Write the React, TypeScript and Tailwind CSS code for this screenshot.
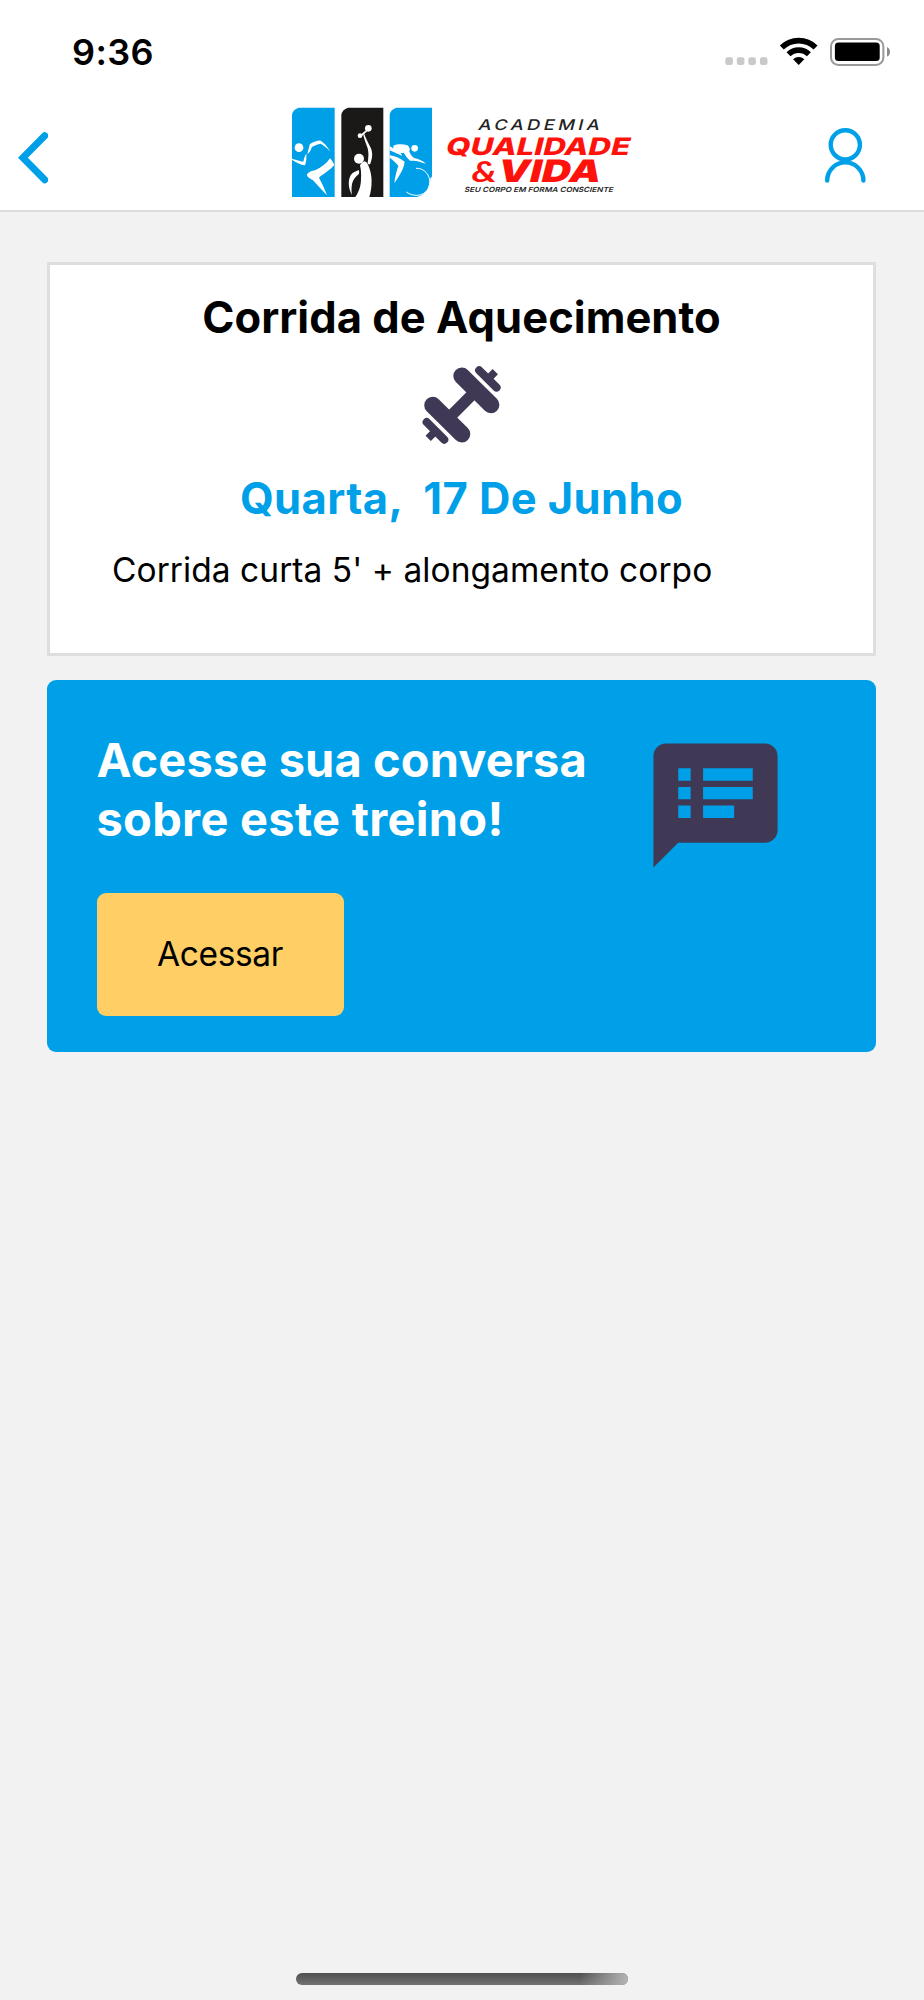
import { MdSpeakerNotes } from 'react-icons/md'

function StatusBar() {
  return (
    <div className="flex h-24 justify-between pl-[72px] pr-[34px] pt-8">
      <span className="text-[36px] font-semibold leading-10 tracking-[0.4px]">9:36</span>
      <svg className="mt-1 h-[30px] w-[166px]" viewBox="724 36 166 30">
        <g fill="#c9c9c9">
          <rect x="725.3" y="57.3" width="7.6" height="7.7" rx="2.3" />
          <rect x="736.8" y="57.3" width="7.6" height="7.7" rx="2.3" />
          <rect x="748.3" y="57.3" width="7.6" height="7.7" rx="2.3" />
          <rect x="759.9" y="57.3" width="7.6" height="7.7" rx="2.3" />
        </g>
        <g fill="none" stroke="#000" strokeWidth="5.6">
          <path d="M781.8 47.6a24 24 0 0 1 33.8 0" />
          <path d="M788.5 54.3a14.6 14.6 0 0 1 20.4 0" />
        </g>
        <path d="M798.7 65l-5.6-5.7a8.2 8.2 0 0 1 11.2 0z" />
        <rect x="831" y="38.9" width="52.4" height="26" rx="7.5" fill="none" stroke="#999" strokeWidth="2" />
        <rect x="834.9" y="42.6" width="44.8" height="18.4" rx="3.5" />
        <path d="M887 47c4 1.6 4 8.4 0 9.6z" fill="#8a8a8a" />
      </svg>
    </div>
  )
}

function Logo() {
  return (
    <svg className="h-[94px] w-[344px]" viewBox="291 106 344 94">
      <g transform="translate(280 95) scale(.33333)">
        <path d="M36 306V60q2-16 20-22h108v268z" fill="#00a0e9" />
        <path d="M184 306V60q2-16 20-22h106v268z" fill="#1a1918" />
        <path d="M329 306V60q2-16 20-22h107v268z" fill="#00a0e9" />
        <g fill="#fff">
          {/* runner */}
          <circle cx="57" cy="158" r="13" />
          <path d="M36 191c14 4 24 7 34 9c2-10 4-18 9-24c1 12 0 24-4 35c-14-2-27-9-39-17z" />
          <path d="M82 178c3-13 5-22 8-31c12-7 23-11 32-10c11 7 21 19 30 33c-10-10-20-19-30-24c-9 1-18 5-26 10c-3 8-7 16-14 22z" />
          <path d="M150 190c5 5 9 12 13 20c-12 14-27 23-42 34c-4 3-4 6-1 10c8 15 15 30 21 47c-13-14-27-29-40-43c-7-7-21-9-20-20c5-7 14-10 24-12c19-8 33-19 45-36z" />
          {/* lifter */}
          <circle cx="237" cy="191" r="15" />
          <circle cx="265" cy="100" r="10" />
          <circle cx="240" cy="122" r="7" />
          <path d="M242 119l20-17 3 4-20 18z" />
          <path d="M251 112c5 16 13 30 21 46c8 17 4 34-1 48c-3 4-7 2-8-2c2-15 4-29 0-44c-5-15-12-30-14-46z" />
          <path d="M240 211c4-6 9-11 14-12c7 2 10 10 14 20c9 25 9 56 0 87h-42c13-20 17-37 17-55c1-14 0-27-3-40z" />
          <path d="M236 225c2 5 2 9 0 13c-10 8-17 17-20 29c-2 12-2 22 0 33c-13-22-13-52 1-65c6-5 13-7 19-10z" />
          {/* cyclist */}
          <circle cx="404" cy="160" r="10" />
          <path d="M340 152c14-6 29-5 42-1c7 4 9 11 6 19c3 7 8 14 14 19c13 3 25 7 36 17l-11-3c-11-5-24-6-37-6c-7-6-13-14-19-24c-9 3-21 0-31-8z" />
          <path d="M329 153l17 11c10 6 20 12 20 18l-37-16z" />
          <path d="M329 181c16 2 30 8 45 19c-3 22-16 43-31 64c2-18 7-36 12-52c-8-10-16-17-26-24z" />
        </g>
        <path d="M408 220c20-1 35 12 40 30c5 25-8 49-35 51c-12 1-24-3-34-10" fill="none" stroke="#fff" strokeWidth="3" />
        <path d="M457 244v64h-56c34-4 50-28 50-58z" fill="#fff" />
      </g>
      <g fontFamily="Inter, sans-serif">
        <text transform="translate(477.5 129.7) skewX(-14) scale(1.25 1)" fontSize="14.7" fontWeight="500" fill="#222" textLength="97" lengthAdjust="spacing">ACADEMIA</text>
        <text transform="translate(444.5 154.7) skewX(-14)" fontSize="24" fontWeight="800" fill="#ff120b" textLength="184" lengthAdjust="spacingAndGlyphs">QUALIDADE</text>
        <text transform="translate(496 181.8) skewX(-14)" fontSize="31" fontWeight="900" fill="#ff120b" textLength="103" lengthAdjust="spacingAndGlyphs">VIDA</text>
        <text transform="translate(464 192.3) skewX(-14)" fontSize="7" fontWeight="600" fill="#222" textLength="149" lengthAdjust="spacingAndGlyphs">SEU CORPO EM FORMA CONSCIENTE</text>
      </g>
      <text x="471.500" y="182" fontFamily="Lato, sans-serif" fontStyle="italic" fontWeight="700" fontSize="29" fill="#ff120b" textLength="25" lengthAdjust="spacingAndGlyphs">&amp;</text>
    </svg>
  )
}

function Header() {
  return (
    <header className="h-[212px] border-b-2 border-[#dcdcdc] bg-white">
      <StatusBar />
      <nav className="flex items-start justify-between pl-[18px] pr-[57px] pt-2.5">
        <svg className="mt-[26px] h-[52px] w-[30px]" viewBox="18 132 30 52">
          <path d="M44.7 135.8L22.9 157.8L44.7 179.8" fill="none" stroke="#00a0e9" strokeWidth="7" strokeLinecap="round" />
        </svg>
        <div className="ml-[55px]">
          <Logo />
        </div>
        <svg className="mt-5 h-[58px] w-[44px]" viewBox="823 126 44 58">
          <g fill="none" stroke="#00a0e9" strokeWidth="4.4" strokeLinecap="round">
            <circle cx="845.3" cy="144.8" r="14.6" />
            <path d="M827.2 180.5a18.1 18.1 0 0 1 36.2 0" />
          </g>
        </svg>
      </nav>
    </header>
  )
}

function Dumbbell() {
  return (
    <svg className="mt-[22px] h-20 w-20" viewBox="421.500 365 80 80" fill="none" stroke="#3f3955">
      <path d="M446.6 419.7L476 390.3" strokeWidth="11.5" />
      <g strokeLinecap="round">
        <path d="M432.2 405.2L461.3 434M461.3 376L490.4 404.8" strokeWidth="17" />
        <path d="M426.2 422.2L443.7 439.7M478.7 370.3L496 387.5" strokeWidth="8.2" />
      </g>
      <path d="M427.7 438.3L435 431M487.5 379L494.8 371.7" strokeWidth="7.5" />
    </svg>
  )
}

export default function App() {
  return (
    <div className="flex h-[2000px] w-[924px] flex-col bg-[#f2f2f2] font-['Inter',sans-serif] text-black">
      <Header />
      <main className="flex flex-1 flex-col gap-6 px-[47px] pt-[50px]">
        <section className="flex h-[394px] w-[829px] flex-col items-center border-[3px] border-[#dedede] bg-white pt-[26px]">
          <h1 className="whitespace-nowrap text-[43.5px] font-bold leading-[52px] tracking-[0.05px]">Corrida de Aquecimento</h1>
          <Dumbbell />
          <h2 className="mt-[27px] whitespace-pre text-[43.5px] font-bold leading-[52px] tracking-[0.4px] text-[#00a0e9]">Quarta,  17 De Junho</h2>
          <p className="mt-[26px] self-start whitespace-nowrap pl-[62px] text-[33.5px] leading-10 tracking-[0.05px]">Corrida curta 5' + alongamento corpo</p>
        </section>

        <section className="flex h-[372px] w-[829px] justify-between rounded-[9px] bg-[#00a0e9] pl-[49.5px] pr-[86px] pt-[51px]">
          <div>
            <h2 className="whitespace-nowrap text-[47px] font-bold leading-[58.5px] text-white">
              <span className="tracking-[0.1px]">Acesse sua conversa</span>
              <br />
              <span className="tracking-[0.28px]">sobre este treino!</span>
            </h2>
            <button className="mt-[45px] h-[123px] w-[247px] rounded-[9px] bg-[#ffce65] text-[33.5px] tracking-[-0.35px]">Acessar</button>
          </div>
          <MdSpeakerNotes className="size-[149px] text-[#3f3955]" />
        </section>
      </main>
      <div className="mb-[15px] flex h-3 w-[332px] justify-end self-center overflow-hidden rounded-full bg-linear-to-b from-[#505050] to-[#727272]">
        <div className="h-full w-12 bg-linear-to-r from-transparent to-[#b4b4b4]" />
      </div>
    </div>
  )
}
